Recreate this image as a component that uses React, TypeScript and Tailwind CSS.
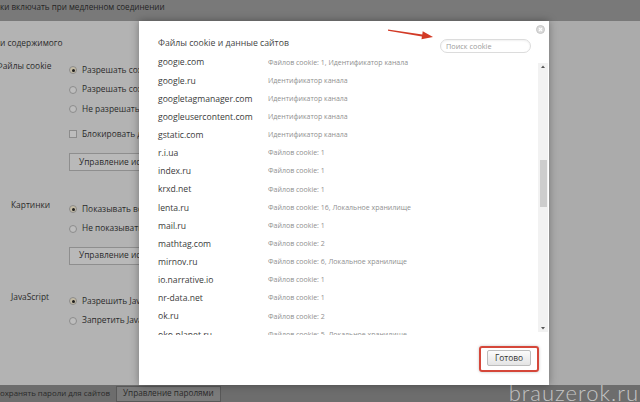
const SITES: { host: string; info: string }[] = [
  { host: 'google.com', info: 'Файлов cookie: 1, Идентификатор канала' },
  { host: 'google.ru', info: 'Идентификатор канала' },
  { host: 'googletagmanager.com', info: 'Идентификатор канала' },
  { host: 'googleusercontent.com', info: 'Идентификатор канала' },
  { host: 'gstatic.com', info: 'Идентификатор канала' },
  { host: 'r.i.ua', info: 'Файлов cookie: 1' },
  { host: 'index.ru', info: 'Файлов cookie: 1' },
  { host: 'krxd.net', info: 'Файлов cookie: 1' },
  { host: 'lenta.ru', info: 'Файлов cookie: 16, Локальное хранилище' },
  { host: 'mail.ru', info: 'Файлов cookie: 1' },
  { host: 'mathtag.com', info: 'Файлов cookie: 2' },
  { host: 'mirnov.ru', info: 'Файлов cookie: 6, Локальное хранилище' },
  { host: 'io.narrative.io', info: 'Файлов cookie: 1' },
  { host: 'nr-data.net', info: 'Файлов cookie: 1' },
  { host: 'ok.ru', info: 'Файлов cookie: 2' },
  { host: 'oko-planet.ru', info: 'Файлов cookie: 5, Локальное хранилище' },
]

function Radio({ checked }: { checked?: boolean }) {
  return (
    <span
      className={`flex h-[8px] w-[8px] shrink-0 items-center justify-center rounded-full border border-[#8c8c8c] ${
        checked ? 'bg-[#c4bba4]' : 'bg-[#bdbdbd]'
      }`}
    >
      {checked && <span className="h-[3px] w-[3px] rounded-full bg-[#1e1e1e]" />}
    </span>
  )
}

function Option({ label, checked, box }: { label: string; checked?: boolean; box?: boolean }) {
  return (
    <div className="flex h-[19.5px] items-center gap-[5px] whitespace-nowrap">
      {box ? (
        <span className="h-[8px] w-[8px] shrink-0 border border-[#8c8c8c] bg-[#bdbdbd]" />
      ) : (
        <Radio checked={checked} />
      )}
      <span>{label}</span>
    </div>
  )
}

function ManageButton() {
  return (
    <div className="flex h-[18px] w-[120px] items-center whitespace-nowrap border border-[#8e8e8e] bg-[#b9b9b9] pl-[9px]">
      Управление исключениями
    </div>
  )
}

function Section({
  label,
  shift,
  children,
}: {
  label: string
  shift?: boolean
  children: React.ReactNode
}) {
  return (
    <div className="flex">
      <div className="mt-[-1.5px] w-[69px] shrink-0 whitespace-nowrap leading-[14px]">
        <span className={shift ? 'ml-[-4px]' : 'ml-[11px]'}>{label}</span>
      </div>
      <div className="flex flex-col">{children}</div>
    </div>
  )
}

function Scrollbar() {
  return (
    <div className="my-[3px] flex w-[10px] shrink-0 flex-col items-center bg-[#f2f2f2]">
      <svg width="6" height="6" viewBox="0 0 6 6" className="mt-[1px]">
        <path d="M3 1.5 L5 4 L1 4 Z" fill="#555" />
      </svg>
      <div className="mt-[90px] h-[47px] w-[7px] bg-[#cdcdcd]" />
      <div className="flex-1" />
      <svg width="6" height="6" viewBox="0 0 6 6" className="mb-[1px]">
        <path d="M1 2 L5 2 L3 4.5 Z" fill="#555" />
      </svg>
    </div>
  )
}

export default function App() {
  return (
    <div className="relative flex h-[402px] w-[640px] flex-col overflow-hidden bg-[#b3b3b3] font-['Open_Sans','Noto_Sans',sans-serif] text-[8.4px] text-[#2b2b2b]">
      <div className="h-[21px] shrink-0 whitespace-nowrap bg-[#797979] text-[8.1px] leading-[14px] text-[#242424]">
        ки включать при медленном соединении
      </div>

      <div className="flex min-h-0 flex-1">
        <div className="w-[139px] shrink-0 overflow-hidden">
          <div className="mt-[15px] whitespace-nowrap leading-[14px]">и содержимого</div>

          <div className="mt-[10.5px]">
            <Section label="Файлы cookie" shift>
              <Option checked label="Разрешать сохранение локальных данных" />
              <Option label="Разрешать сохранение данных только для сеанса" />
              <Option label="Не разрешать сайтам сохранять данные" />
              <div className="mt-[5.5px]">
                <Option box label="Блокировать данные и файлы cookie сторонних сайтов" />
              </div>
              <div className="mt-[9px]">
                <ManageButton />
              </div>
            </Section>
          </div>

          <div className="mt-[28.5px]">
            <Section label="Картинки">
              <Option checked label="Показывать все" />
              <Option label="Не показывать изображения" />
              <div className="mt-[8px]">
                <ManageButton />
              </div>
            </Section>
          </div>

          <div className="mt-[27px]">
            <Section label="JavaScript">
              <Option checked label="Разрешить JavaScript на всех сайтах" />
              <Option label="Запретить JavaScript на всех сайтах" />
            </Section>
          </div>
        </div>

        <div className="relative z-10 flex w-[410px] shrink-0 flex-col bg-white shadow-[0_0_8px_rgba(0,0,0,0.35)]">
          <div className="flex h-[39px] shrink-0 items-start pl-[19px] pr-[4px]">
            <div className="mt-[15px] whitespace-nowrap text-[8.7px] leading-[14px] text-[#444]">
              Файлы cookie и данные сайтов
            </div>
            <div className="ml-auto mt-[18px] flex h-[14px] w-[91px] items-center rounded-full border border-[#dcdcdc] bg-white pl-[5px] text-[7.3px] text-[#9b9b9b] shadow-[inset_0_1px_2px_rgba(0,0,0,0.06)]">
              Поиск cookie
            </div>
            <svg width="9" height="9" viewBox="0 0 9 9" className="ml-[5px] mt-[4px]">
              <circle cx="4.5" cy="4.5" r="4" fill="#dadada" stroke="#c6c6c6" />
              <path d="M3 3 L6 6 M6 3 L3 6" stroke="#fff" strokeWidth="1.1" />
            </svg>
          </div>

          <div className="flex h-[275px] shrink-0 pr-[1px]">
            <div className="min-w-0 flex-1 overflow-hidden">
              <div className="mt-[-6.2px]">
                {SITES.map((s) => (
                  <div key={s.host} className="flex h-[18.15px] items-center whitespace-nowrap">
                    <div className="w-[129px] shrink-0 pl-[19px] text-[8.6px] text-[#3a3a3a]">{s.host}</div>
                    <div className="text-[7px] text-[#8f8f8f]">{s.info}</div>
                  </div>
                ))}
              </div>
            </div>
            <Scrollbar />
          </div>

          <div className="flex flex-1 items-start justify-end pr-[10px] pt-[11px]">
            <div className="rounded-[3px] border-2 border-[#d5473a] px-[6px] pb-[4px] pt-[2px] shadow-[0_0_3px_rgba(0,0,0,0.25)]">
              <div className="flex h-[16px] w-[44px] items-center justify-center rounded-[2px] border border-[#bdbdbd] bg-gradient-to-b from-[#fbfbfb] to-[#e4e4e4] text-[8.4px] text-[#333]">
                Готово
              </div>
            </div>
          </div>

          <svg width="52" height="20" viewBox="0 0 52 20" className="absolute left-[246px] top-[3px]">
            <path d="M3 5.6 L37.3 10.4 L37.7 7.3 L48 13 L36.5 15.3 L36.9 12.4 L3 6.8 Z" fill="#d23a26" />
          </svg>
        </div>

        <div className="flex-1 bg-[#ababab]" />
      </div>

      <div className="flex h-[17px] shrink-0 items-center whitespace-nowrap bg-[#6d6d6d] text-[7.9px] text-[#2a2a2a]">
        <span className="ml-[-5px]">Сохранять пароли для сайтов</span>
        <div className="ml-[6px] flex h-[16px] w-[105px] items-center justify-center border border-[#585858] bg-[#7b7b7b] text-[8.2px]">
          Управление паролями
        </div>
      </div>

      <div className="pointer-events-none absolute bottom-[-7px] right-[1px] font-['Lato',sans-serif] text-[22px] font-light tracking-[1px] text-[#c4c4c4]">
        brauzerok.ru
      </div>
    </div>
  )
}
